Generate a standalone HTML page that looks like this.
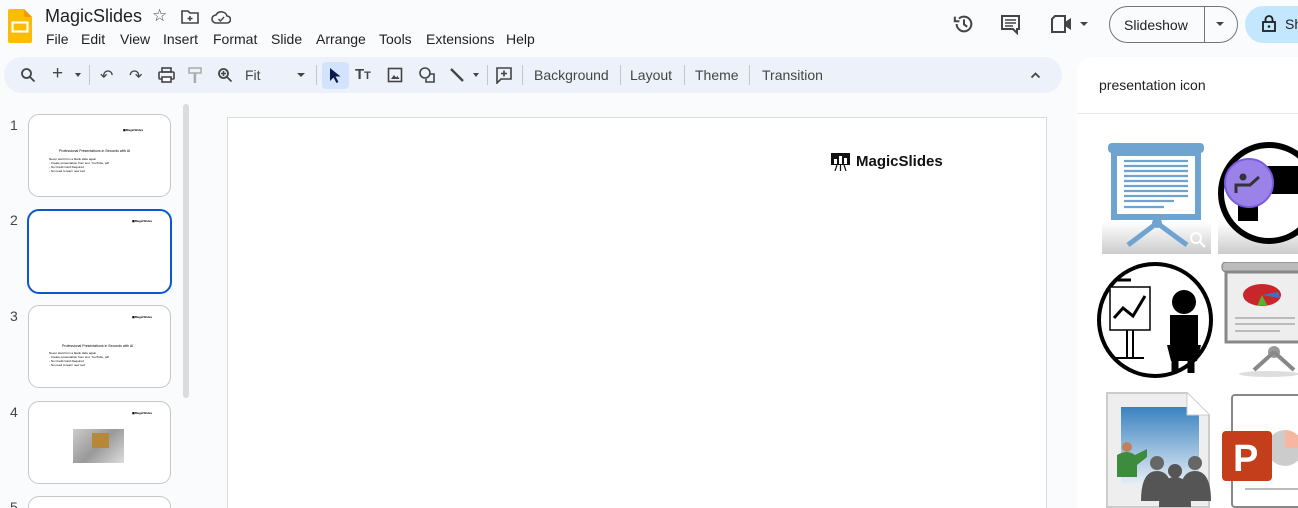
<!DOCTYPE html>
<html style="width:1298px;height:508px;overflow:hidden"><head><meta charset="utf-8"><style>
*{margin:0;padding:0;box-sizing:border-box}
html,body{width:1298px;height:508px;overflow:hidden}
body{background:#f9fbfd;font-family:"Liberation Sans",Arial,sans-serif;color:#1f1f1f;position:relative}
.abs{position:absolute}
.menu span{font-size:14px;position:absolute;top:0}
.tb{left:4px;top:57px;width:1058px;height:36px;background:#edf2fa;border-radius:18px}
.tbt{font-size:14px;color:#444;top:10px}
.sep{width:1px;height:20px;background:#c4c7c5;top:8px}
.thumb{left:28px;width:143px;height:83px;background:#fff;border:1px solid #c7c7c7;border-radius:11px;overflow:hidden}
.num{left:10px;font-size:14px;color:#444}
.mini{position:absolute;font-size:3px;color:#000;white-space:nowrap}
</style></head><body>
<svg class="abs" style="left:8px;top:9px" width="24" height="34" viewBox="0 0 24 34"><path d="M2 0h14l8 8v24a2 2 0 0 1-2 2H2a2 2 0 0 1-2-2V2a2 2 0 0 1 2-2z" fill="#fbbc04"/><path d="M16 0l8 8h-6a2 2 0 0 1-2-2z" fill="#f29900"/><rect x="4.5" y="13.5" width="15" height="9" fill="none" stroke="#fff" stroke-width="2.2"/></svg>
<div class="abs" style="left:45px;top:6px;font-size:18px;color:#1f1f1f">MagicSlides</div>
<div class="abs" style="left:152px;top:6px;font-size:17px;color:#444">☆</div>
<svg class="abs" style="left:181px;top:10px" width="18" height="14" viewBox="0 0 18 14"><path d="M1 1h6l2 2h8v10H1z" fill="none" stroke="#444" stroke-width="1.6"/><path d="M9 6v5M6.5 8.5h5" stroke="#444" stroke-width="1.5"/></svg>
<svg class="abs" style="left:211px;top:10px" width="20" height="14" viewBox="0 0 20 14"><path d="M5 13a4 4 0 0 1 0-8 6 6 0 0 1 11 1 3.5 3.5 0 0 1 0 7z" fill="none" stroke="#444" stroke-width="1.6"/><path d="M7.5 9l2 2 3.5-4" fill="none" stroke="#444" stroke-width="1.4"/></svg>
<div class="abs menu" style="left:46px;top:31px;font-size:14px">
<span style="left:0">File</span><span style="left:35px">Edit</span><span style="left:74px">View</span><span style="left:117px">Insert</span><span style="left:167px">Format</span><span style="left:225px">Slide</span><span style="left:270px">Arrange</span><span style="left:333px">Tools</span><span style="left:380px">Extensions</span><span style="left:460px">Help</span></div>
<svg class="abs" style="left:953px;top:13px" width="22" height="22" viewBox="0 0 24 24"><path d="M4 12a8 8 0 1 0 2.5-5.8" fill="none" stroke="#444" stroke-width="2.2"/><path d="M2 4v5h5" fill="none" stroke="#444" stroke-width="2.2"/><path d="M12 7v5.5l3.5 2.5" fill="none" stroke="#444" stroke-width="2.2"/></svg>
<svg class="abs" style="left:1000px;top:14px" width="21" height="21" viewBox="0 0 21 21"><path d="M2 2h17v13h-2v4l-4-4H2z" fill="none" stroke="#444" stroke-width="2"/><path d="M5 6h11M5 9h11M5 12h8" stroke="#444" stroke-width="1.6"/></svg>
<svg class="abs" style="left:1050px;top:15px" width="24" height="18" viewBox="0 0 24 18"><path d="M2 4l3-3h10v16H2z" fill="none" stroke="#444" stroke-width="2"/><path d="M15 7l6-4v12l-6-4z" fill="#444"/></svg>
<div class="abs" style="left:1080px;top:22px;border-left:4px solid transparent;border-right:4px solid transparent;border-top:4px solid #444"></div>
<div class="abs" style="left:1109px;top:6px;width:129px;height:37px;border:1px solid #747775;border-radius:19px"></div>
<div class="abs" style="left:1124px;top:17px;font-size:14px;color:#1f1f1f">Slideshow</div>
<div class="abs" style="left:1204px;top:7px;width:1px;height:35px;background:#747775"></div>
<div class="abs" style="left:1216px;top:22px;border-left:4px solid transparent;border-right:4px solid transparent;border-top:4px solid #444"></div>
<div class="abs" style="left:1245px;top:6px;width:80px;height:37px;background:#c2e7ff;border-radius:19px"></div>
<svg class="abs" style="left:1262px;top:15px" width="14" height="17" viewBox="0 0 14 17"><rect x="1" y="7" width="12" height="9" fill="none" stroke="#1f1f1f" stroke-width="1.8"/><path d="M3.5 7V4.5a3.5 3.5 0 0 1 7 0V7" fill="none" stroke="#1f1f1f" stroke-width="1.8"/><circle cx="7" cy="11.5" r="1.3" fill="#1f1f1f"/></svg>
<div class="abs" style="left:1285px;top:16px;font-size:14px">Sh</div>
<div class="abs tb"></div>
<svg class="abs" style="left:20px;top:67px" width="16" height="16" viewBox="0 0 16 16"><circle cx="6.5" cy="6.5" r="4.5" fill="none" stroke="#444" stroke-width="1.8"/><path d="M10 10l4.5 4.5" stroke="#444" stroke-width="1.8"/></svg>
<div class="abs" style="left:52px;top:63px;font-size:19px;color:#444">+</div>
<div class="abs" style="left:75px;top:73px;border-left:3.5px solid transparent;border-right:3.5px solid transparent;border-top:4px solid #444"></div>
<div class="abs sep" style="left:89px;top:65px"></div>
<div class="abs" style="left:100px;top:66px;font-size:16px;color:#444">↶</div>
<div class="abs" style="left:129px;top:66px;font-size:16px;color:#444">↷</div>
<svg class="abs" style="left:158px;top:67px" width="17" height="16" viewBox="0 0 17 16"><rect x="4" y="1" width="9" height="4" fill="none" stroke="#444" stroke-width="1.6"/><rect x="1" y="5" width="15" height="7" rx="1" fill="none" stroke="#444" stroke-width="1.6"/><rect x="4" y="10" width="9" height="5" fill="#fff" stroke="#444" stroke-width="1.6"/></svg>
<svg class="abs" style="left:188px;top:67px" width="14" height="17" viewBox="0 0 14 17"><rect x="1" y="1" width="12" height="5" fill="none" stroke="#aaa" stroke-width="1.5"/><path d="M7 6v3M7 9h-0.1v7" stroke="#aaa" stroke-width="2.5"/></svg>
<svg class="abs" style="left:217px;top:67px" width="16" height="16" viewBox="0 0 16 16"><circle cx="6.5" cy="6.5" r="4.5" fill="none" stroke="#444" stroke-width="1.8"/><path d="M10 10l4.5 4.5M6.5 4v5M4 6.5h5" stroke="#444" stroke-width="1.6"/></svg>
<div class="abs tbt" style="left:245px;top:67px">Fit</div>
<div class="abs" style="left:297px;top:73px;border-left:4px solid transparent;border-right:4px solid transparent;border-top:4px solid #444"></div>
<div class="abs sep" style="left:316px;top:65px"></div>
<div class="abs" style="left:322px;top:62px;width:27px;height:27px;background:#d3e3fd;border-radius:4px"></div>
<svg class="abs" style="left:329px;top:67px" width="13" height="17" viewBox="0 0 13 17"><path d="M1 1v13l3.5-3.5 3 5.5 2-1-3-5.5h5z" fill="#041e49"/></svg>
<div class="abs" style="left:355px;top:66px;font-size:15px;font-weight:bold;color:#444">T<span style="font-size:11px">T</span></div>
<svg class="abs" style="left:387px;top:67px" width="16" height="16" viewBox="0 0 16 16"><rect x="1.5" y="1.5" width="13" height="13" fill="none" stroke="#444" stroke-width="1.6"/><path d="M4 12l3-4 2 2.5 1.5-1.5 2 3z" fill="#444"/></svg>
<svg class="abs" style="left:418px;top:66px" width="18" height="18" viewBox="0 0 18 18"><circle cx="7" cy="7" r="5" fill="none" stroke="#444" stroke-width="1.6"/><path d="M12 8h4v8H8v-3" fill="none" stroke="#444" stroke-width="1.6"/></svg>
<svg class="abs" style="left:449px;top:67px" width="16" height="16" viewBox="0 0 16 16"><path d="M2 2l12 12" stroke="#444" stroke-width="2.4"/></svg>
<div class="abs" style="left:473px;top:73px;border-left:3.5px solid transparent;border-right:3.5px solid transparent;border-top:4px solid #444"></div>
<div class="abs sep" style="left:487px;top:65px"></div>
<svg class="abs" style="left:495px;top:66px" width="18" height="18" viewBox="0 0 18 18"><path d="M2 2h14v11H6l-4 4z" fill="none" stroke="#444" stroke-width="1.6"/><path d="M9 4.5v6M6 7.5h6" stroke="#444" stroke-width="1.6"/></svg>
<div class="abs sep" style="left:522px;top:65px"></div>
<div class="abs tbt" style="left:534px;top:67px">Background</div>
<div class="abs sep" style="left:620px;top:65px"></div>
<div class="abs tbt" style="left:630px;top:67px">Layout</div>
<div class="abs sep" style="left:684px;top:65px"></div>
<div class="abs tbt" style="left:695px;top:67px">Theme</div>
<div class="abs sep" style="left:749px;top:65px"></div>
<div class="abs tbt" style="left:762px;top:67px">Transition</div>
<svg class="abs" style="left:1030px;top:71px" width="11" height="8" viewBox="0 0 11 8"><path d="M1.5 6.5l4-4 4 4" fill="none" stroke="#444" stroke-width="1.8"/></svg>
<div class="abs num" style="top:117px">1</div>
<div class="abs thumb" style="top:114px">
 <div class="mini" style="left:94px;top:13px;font-weight:bold">▣MagicSlides</div>
 <div class="mini" style="left:30px;top:34px;font-size:3.5px">Professional Presentations in Seconds with AI</div>
 <div class="mini" style="left:20px;top:42px;line-height:4px">Never start from a blank slide again<br>- Create presentation from text, YouTube, pdf<br>- No Credit Card Required<br>- No need to learn new tool</div>
</div>
<div class="abs num" style="top:212px">2</div>
<div class="abs thumb" style="top:209px;left:27px;width:145px;height:85px;border:2px solid #0b57d0;border-radius:12px">
 <div class="mini" style="left:103px;top:8px;font-weight:bold">▣MagicSlides</div></div>
<div class="abs num" style="top:308px">3</div>
<div class="abs thumb" style="top:305px">
 <div class="mini" style="left:103px;top:9px;font-weight:bold">▣MagicSlides</div>
 <div class="mini" style="left:33px;top:38px;font-size:3.5px">Professional Presentations in Seconds with AI</div>
 <div class="mini" style="left:20px;top:45px;line-height:4px">Never start from a blank slide again<br>- Create presentation from text, YouTube, pdf<br>- No Credit Card Required<br>- No need to learn new tool</div>
</div>
<div class="abs num" style="top:404px">4</div>
<div class="abs thumb" style="top:401px">
 <div class="mini" style="left:103px;top:9px;font-weight:bold">▣MagicSlides</div>
 <div class="abs" style="left:44px;top:27px;width:51px;height:34px;background:linear-gradient(135deg,#ccc,#999 50%,#ddd)"></div>
 <div class="abs" style="left:63px;top:31px;width:17px;height:15px;background:#b8862e;opacity:.9"></div>
</div>
<div class="abs num" style="top:499px">5</div>
<div class="abs thumb" style="top:496px;height:12px;border-bottom:none;border-radius:11px 11px 0 0"></div>
<div class="abs" style="left:183px;top:104px;width:6px;height:294px;background:#dadce0;border-radius:3px"></div>
<div class="abs" style="left:227px;top:117px;width:820px;height:391px;background:#fff;border:1px solid #dadce0;border-bottom:none"></div>
<svg class="abs" style="left:831px;top:153px" width="20" height="18" viewBox="0 0 20 18"><rect x="0" y="0" width="19" height="12" fill="#111"/><rect x="3" y="6" width="3" height="5" fill="#fff"/><rect x="8" y="3" width="3" height="8" fill="#fff"/><rect x="13" y="5" width="3" height="6" fill="#fff"/><path d="M6 12l-2 6M13 12l2 6M9.5 12v6" stroke="#111" stroke-width="1.2"/></svg>
<div class="abs" style="left:856px;top:153px;font-size:15px;font-weight:bold;color:#111">MagicSlides</div>
<div class="abs" style="left:1077px;top:57px;width:221px;height:451px;background:#fff;border-radius:16px 0 0 0"></div>
<div class="abs" style="left:1077px;top:113px;width:221px;height:1px;background:#e8eaed"></div>
<div class="abs" style="left:1099px;top:77px;font-size:14px;color:#1f1f1f">presentation icon</div>
<div class="abs" style="left:1102px;top:222px;width:109px;height:32px;background:linear-gradient(#fff,#ccc)"></div>
<svg class="abs" style="left:1102px;top:141px" width="110" height="113" viewBox="0 0 110 113"><rect x="6" y="2" width="96" height="10" rx="4" fill="#6fa3d0"/><rect x="12" y="12" width="84" height="64" fill="#fff" stroke="#6fa3d0" stroke-width="6"/><g stroke="#6fa3d0" stroke-width="2.2"><path d="M22 20h64M22 25h64M22 30h64M22 35h64M22 40h64M22 45h64M22 50h64M22 55h64M22 60h50M22 66h40"/></g><circle cx="55" cy="82" r="5" fill="#6fa3d0"/><path d="M55 82L26 104M55 82l30 22" stroke="#6fa3d0" stroke-width="5"/><circle cx="94" cy="97" r="5" fill="none" stroke="#fff" stroke-width="2"/><path d="M98 101l5 5" stroke="#fff" stroke-width="2"/></svg>
<div class="abs" style="left:1218px;top:222px;width:80px;height:32px;background:linear-gradient(#fff,#ccc)"></div>
<svg class="abs" style="left:1216px;top:141px" width="82" height="110" viewBox="0 0 82 110"><circle cx="53" cy="52" r="48" fill="#fff" stroke="#000" stroke-width="6"/><rect x="44" y="25" width="40" height="28" fill="#000"/><rect x="22" y="55" width="20" height="25" fill="#000"/><circle cx="33" cy="42" r="24" fill="#9b82e8" stroke="#7a5ae0" stroke-width="2"/><circle cx="27" cy="36" r="3.5" fill="#333"/><path d="M20 52v-8h14l9-8" stroke="#333" stroke-width="3" fill="none"/></svg>
<svg class="abs" style="left:1097px;top:260px" width="118" height="120" viewBox="0 0 118 120"><circle cx="58" cy="60" r="56" fill="#fff" stroke="#000" stroke-width="4"/><rect x="13" y="27" width="40" height="43" fill="#fff" stroke="#000" stroke-width="1.5"/><path d="M20 20h14" stroke="#000" stroke-width="3"/><path d="M17 58l9-10 10 8 12-20" fill="none" stroke="#000" stroke-width="3"/><path d="M30 70v28M36 70v28M17 98h30" stroke="#000" stroke-width="2"/><circle cx="87" cy="42" r="12" fill="#000"/><path d="M73 55h28v30h-28zM70 85h34l-4 16H74z" fill="#000"/><path d="M78 101v12M94 101v12" stroke="#000" stroke-width="7"/></svg>
<svg class="abs" style="left:1219px;top:262px" width="80" height="118" viewBox="0 0 80 118"><rect x="3" y="0" width="80" height="10" rx="4" fill="#bbb" stroke="#777"/><rect x="7" y="10" width="80" height="70" fill="#eee" stroke="#888" stroke-width="3"/><ellipse cx="43" cy="33" rx="19" ry="11" fill="#c8262a"/><path d="M43 33l16-3 2 6z" fill="#3a75c4"/><path d="M43 33l5 10-10 1z" fill="#5ab030"/><g stroke="#bbb" stroke-width="2"><path d="M16 56h60M16 62h60M16 69h45"/></g><circle cx="55" cy="90" r="6" fill="#999"/><path d="M55 90l-20 18M55 90l20 18" stroke="#888" stroke-width="4"/><ellipse cx="50" cy="112" rx="30" ry="3" fill="#ddd"/></svg>
<svg class="abs" style="left:1105px;top:391px" width="108" height="117" viewBox="0 0 108 117"><defs><linearGradient id="g" x1="0" y1="0" x2="0" y2="1"><stop offset="0" stop-color="#3a82c0"/><stop offset="1" stop-color="#e8f0f6"/></linearGradient></defs><path d="M2 2h80l22 22v92H2z" fill="#eee" stroke="#ccc" stroke-width="2"/><rect x="16" y="16" width="78" height="78" fill="url(#g)"/><path d="M82 2v22h22" fill="#fff" stroke="#ccc"/><circle cx="22" cy="56" r="5" fill="#c08060"/><path d="M12 86v-22q10-6 18 0l12-6v8l-10 8v12z" fill="#3d8b3d"/><circle cx="52" cy="72" r="7" fill="#666"/><circle cx="90" cy="72" r="7" fill="#666"/><circle cx="70" cy="80" r="7" fill="#555"/><path d="M36 110q0-30 16-30t16 30zM74 110q0-30 16-30t16 30zM54 116q0-30 16-30t16 30z" fill="#555"/></svg>
<svg class="abs" style="left:1220px;top:393px" width="78" height="115" viewBox="0 0 78 115"><rect x="12" y="2" width="80" height="112" rx="3" fill="#fff" stroke="#888" stroke-width="2"/><circle cx="65" cy="55" r="18" fill="#ccc"/><path d="M65 37v18h18a18 18 0 0 0-18-18z" fill="#f5b7a0"/><path d="M25 96h60" stroke="#bbb" stroke-width="2"/><rect x="2" y="38" width="50" height="50" rx="4" fill="#c43e1c"/><text x="13" y="78" font-family="Liberation Sans" font-weight="bold" font-size="38" fill="#fff">P</text></svg>
</body></html>
